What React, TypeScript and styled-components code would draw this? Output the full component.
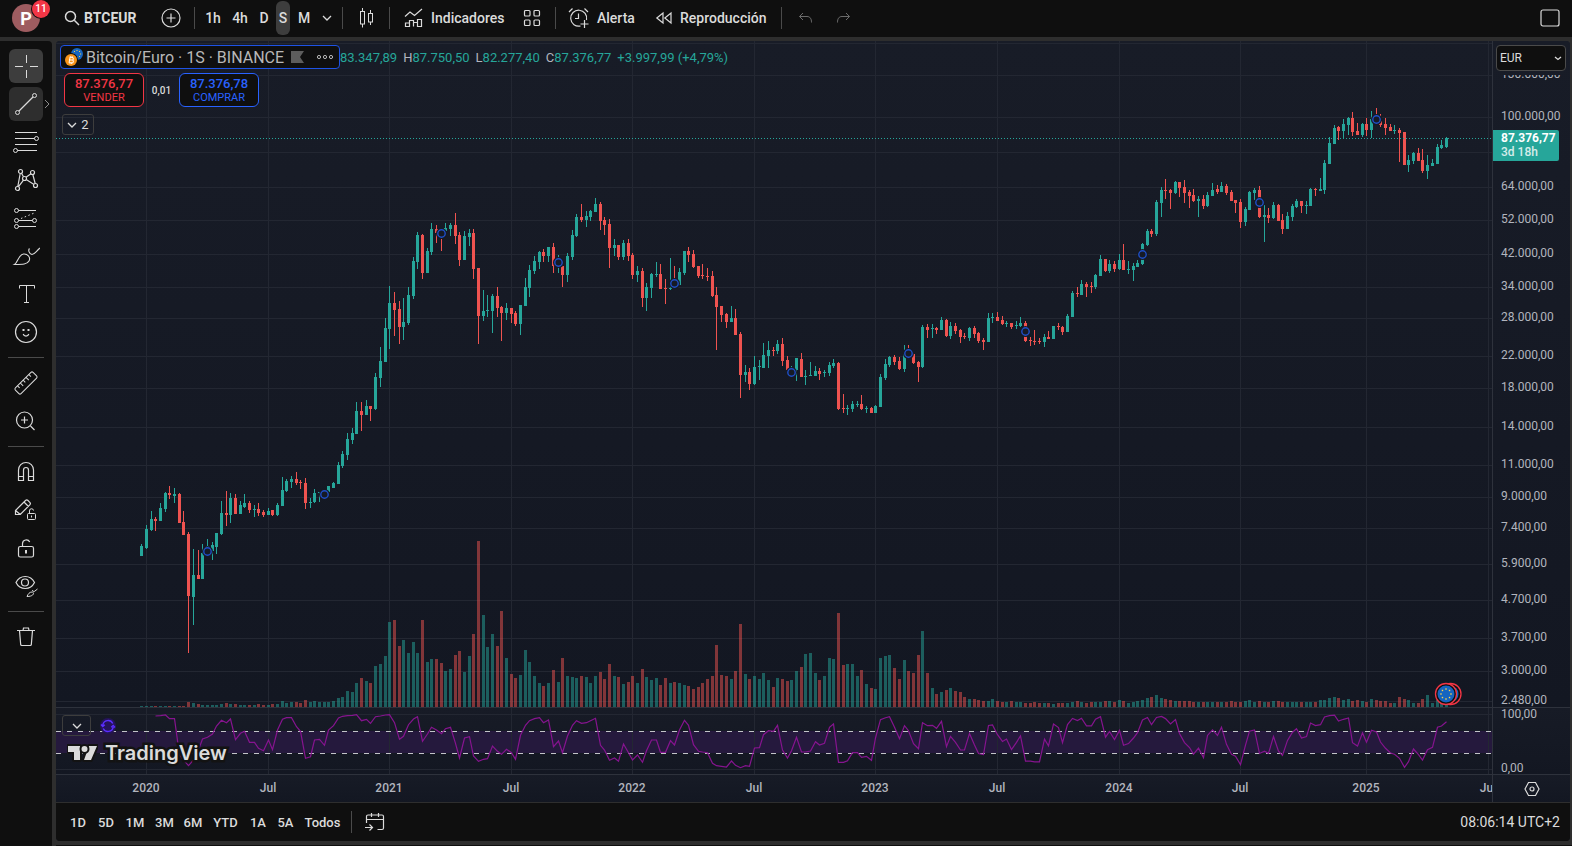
import React from "react";
import styled, { createGlobalStyle } from "styled-components";

const GlobalStyle = createGlobalStyle`
  * { box-sizing: border-box; }
  html, body { margin: 0; background: #2e2e2e; }
  body, button, select { font-family: Roboto, "Noto Sans", sans-serif; }
  button { appearance: none; border: 0; background: none; padding: 0; margin: 0; color: inherit; cursor: pointer; }
  svg { flex-shrink: 0; }
`;

/* ---------- chart data ---------- */

const FIRST_BAR = 85.4;
const BAR_STEP = 4.6755;
const barX = (i: number) => Math.round(FIRST_BAR + BAR_STEP * i);

// Each run: top offset of the run, then bars as colour + high, body top, body bottom, low (in thirds of a pixel).
const RUNS: [number, string][] = [
  [379, `g372,378,408,408 g315,327,384,387 g273,297,330,333 r291,297,303,333 g249,264,303,303 g216,219,267,276 r198,219,225,237 g204,222,228,249 r219,222,309,309 r273,306,345,345
  r336,342,528,699 g387,465,531,615 r390,465,477,477 g372,399,477,477 g357,378,390,405 g366,375,393,420 g339,339,381,402 g243,279,342,345 r213,279,285,318 g219,234,285,309
  r222,234,282,282 g243,255,282,282 g222,249,261,264 r243,249,270,279 g255,267,270,291 r249,267,279,288 r270,276,285,291 g264,273,285,285 r270,270,285,288 g249,255,285,288
  g171,210,258,258 g177,183,213,216 g168,177,186,204 r156,177,189,195 r180,186,189,207 r174,189,249,267 g234,246,249,264 g207,219,246,249 g216,216,219,246 g213,216,222,225
  g198,198,216,222 g186,189,204,204 g126,135,192,192 g93,102,138,144 g39,57,105,120 g24,39,60,72 g-54,-27,42,42`],
  [149, `r636,663,675,723 g630,648,675,675 r648,648,657,693
  g549,561,657,660 g471,513,564,591 g384,414,516,516 g288,339,417,477 r306,339,360,438 r333,357,411,462 g324,396,411,450 g291,315,399,405 g201,213,318,327 g126,135,216,237
  r132,135,249,267 g174,183,249,249 g99,117,186,195 r105,117,129,159 r117,120,144,183 g99,114,123,126 g99,105,117,138 r69,105,138,162 r126,135,210,228 g123,138,210,210
  g117,129,141,168 r117,129,237,267 r234,234,378,462 g300,363,378,393 g315,360,363,381 g312,318,363,429 r291,318,354,381 r348,351,369,453 g339,354,369,390 r354,354,372,399
  r363,369,402,408 g345,345,402,435 g264,291,348,348 g225,240,294,321 g198,213,243,252 g183,186,216,237 r177,186,198,216 g171,171,198,216 r159,171,228,249 g195,210,228,249
  r222,228,255,291 g189,198,255,276 g120,135,201,210 g72,81,138,141 r42,81,90,96 g63,78,90,111 g60,63,81,93 g24,42,66,66 r36,42,93,120 r81,90,105,135
  r87,102,174,234 g147,165,174,198 r165,165,201,210 g150,159,201,210 r147,159,198,213 r189,195,255,267 g228,243,255,276 r234,243,324,351 g279,291,324,363 g249,252,294,324 g216,252,255,261`],
  [179, `r132,162,207,207 r177,204,207,252 g114,204,207,210 r138,180,192,195 g144,156,195,195 g93,93,159,165 r81,93,105,126 r90,102,141,144 r138,138,168,174
  r132,165,168,177 r144,168,171,183 r153,168,228,231 r201,225,261,390 r258,258,285,306 r279,282,306,324 g258,294,306,306 r267,294,345,345 r336,342,465,534 g435,456,465,486
  r444,456,492,510 g408,441,492,495 g420,438,441,480 g369,405,444,444 g363,390,408,444 r381,390,393,408 g360,372,393,402 r354,372,423,438 r408,420,450,456 g438,447,459,465
  g414,414,450,483 r399,417,471,471 g450,468,471,495 g426,465,468,468 g438,453,468,468 r444,453,462,480 g450,456,459,471 g426,435,459,468 g417,429,438,444 r426,429,567,570
  r522,564,567,579 g555,564,567,585 g543,552,567,576 g543,552,555,561 r525,552,567,570 g558,564,567,579 r561,564,579,579 g555,558,579,579 g462,471,561,561 g417,432,474,480
  g408,411,435,441 r405,411,426,435 r411,423,447,450 g375,402,447,456 r375,390,411,417 r399,402,429,432 r423,426,441,486 g315,321,441,444 r312,321,330,354 g312,324,327,354 r321,324,330,342`],
  [129, `g441,450,480,480 r447,450,498,501 g456,468,498,507 r459,468,483,492 r477,480,501,519 r489,498,501,507 g471,474,504,513 r468,474,492,504 r486,489,513,519
  r504,510,516,540 g429,444,516,516 g429,441,444,459 r426,441,453,453 r438,450,462,465 g453,459,462,471 r459,459,471,477 g453,465,468,477 g441,459,468,471 r453,459,513,516
  r501,510,513,528 r480,513,516,525 r504,513,516,522 g492,501,516,531 r483,501,507,507 g468,468,507,507 r459,468,471,480 r468,471,486,495 g432,438,486,486 g363,369,441,441
  r351,369,372,381 g330,342,375,375 r336,342,351,381 r336,348,351,369 g312,315,351,357 g255,267,318,318 r267,267,303,306 g270,282,303,309 r273,282,297,306 g252,270,297,300
  r222,270,300,300 g273,297,300,312 g279,288,300,333 g270,279,291,291 g219,222,282,285 g177,183,225,228 r177,183,192,201 g90,96,192,198 g51,60,99,141 r27,60,63,87
  r57,60,69,117 g33,36,69,72 r36,36,54,81 r30,51,69,99 r60,66,78,114 r57,75,93,96 g78,87,93,141`],
  [49, `r315,327,348,357 g306,315,348,351 g279,300,318,318
  r285,297,306,312 g276,288,306,306 r282,288,309,315 r300,306,333,333 r330,330,339,369 r327,336,396,414 g351,357,396,408 g303,306,360,360 g294,300,309,330 r288,300,381,384
  g345,375,381,456 r354,375,384,399 g336,345,384,387 r342,345,393,393 r372,390,417,432 g366,378,417,417 g342,348,381,393 g327,333,351,354 r333,333,348,369 g333,345,348,372
  g294,297,348,348 r294,297,300,318 g264,297,303,303 g210,219,300,312 g141,159,222,222 g105,114,162,162 r108,111,123,150 g87,102,123,147 g81,84,105,135 r66,84,126,138
  r99,123,135,135 g99,102,135,141 r84,102,120,138 g63,87,120,144 r54,75,90,102 r72,93,105,111 r84,102,114,135 r102,111,123,123 g105,120,123,132 r114,120,129,216
  r126,126,225,225 g195,210,225,246 g186,189,213,222 r174,189,213,213 r177,210,243,249 g195,225,243,267 g207,219,228,228 g162,171,222,222 g150,165,174,177 g141,144,171,174`],
];

type Bar = { up: boolean; high: number; top: number; bottom: number; low: number };

const BARS: Bar[] = RUNS.flatMap(([base, text]) =>
  text.trim().split(/\s+/).map((item) => {
    const [high, top, bottom, low] = item.slice(1).split(",").map((v) => base + Math.round(Number(v) / 3));
    return { up: item[0] === "g", high, top, bottom, low };
  })
);

const VOLUME = [
  1, 1, 1, 1, 1, 1, 1, 1, 1, 1, 5, 4, 3, 2, 2, 2, 2, 3, 4, 3, 3, 2, 2, 2, 2, 3, 2, 2, 3, 3, 6, 4, 5, 5, 4, 7, 5, 6, 5, 5, 5, 6, 9, 10, 16, 15, 24,
  29, 26, 24, 41, 43, 51, 85, 87, 61, 67, 54, 65, 54, 87, 45, 48, 48, 44, 36, 38, 52, 56, 35, 51, 73, 166, 92, 60, 73, 61, 96, 49, 33, 29, 32, 57, 45,
  31, 24, 21, 24, 37, 25, 49, 31, 30, 29, 31, 30, 24, 31, 35, 28, 43, 31, 30, 23, 25, 31, 24, 38, 30, 27, 29, 22, 29, 24, 25, 24, 22, 21, 18, 20, 24,
  28, 31, 62, 32, 31, 28, 36, 83, 33, 28, 31, 28, 34, 27, 20, 29, 28, 26, 27, 36, 40, 53, 54, 34, 27, 31, 49, 48, 94, 42, 43, 43, 31, 37, 23, 19, 18,
  49, 51, 52, 39, 28, 47, 36, 34, 52, 76, 34, 19, 13, 15, 17, 19, 16, 15,
  10, 8, 8, 7, 6, 6, 8, 6, 5, 5, 6, 5, 5, 4, 4, 5, 4, 4, 4, 3, 4, 4, 4, 5, 6, 5, 4, 5, 5, 5, 6, 6, 5, 7, 6, 4, 5, 6, 7, 9, 10, 12, 9, 8, 7, 6, 6, 6, 6, 5,
  5, 5, 5, 5, 5, 5, 5, 6, 5, 5, 6, 7, 5, 6, 5, 5, 6, 6, 5, 5, 5, 5, 5, 5, 5, 5, 7, 7, 9, 10, 9, 7, 8, 6, 7, 6, 5, 8, 7, 6, 6, 4, 4, 10, 8, 7, 4, 4, 8, 12, 4, 7, 5, 4,
];

// RSI line of the first and of the last bars, in thirds of a pixel; the bars between are derived from the closes.
const RSI_LENGTH = 3;
const RSI_HEAD = [
  558, 557, 555, 566, 566, 675, 690, 707, 690, 660, 627, 622, 612, 588, 571, 578, 567, 629, 610, 604, 637, 637, 655, 662, 630, 659, 600, 568, 563, 563,
  590, 604, 685, 680, 630, 628, 646, 600, 587, 564, 559, 557, 556, 554, 572, 568, 580, 560, 558, 555, 554, 578, 628, 619, 584, 567, 560, 634, 612, 592,
  600, 611, 596, 592, 640, 684, 624, 620, 678, 694, 688, 686, 648, 664, 673, 658, 668, 688, 616, 586, 572, 566, 563, 578, 570, 650, 633, 668, 618, 586,
  572, 580, 578, 572, 565, 646, 660, 691, 684, 694, 642, 668, 690, 675, 697, 662, 630, 630, 667, 667, 632, 645, 600, 571, 586, 644, 664, 666, 668, 700,
  707, 709, 711, 693, 706, 713, 707, 709, 654, 653, 614, 602, 604, 586, 660, 684, 662, 622, 666, 666, 663, 635, 645, 640, 592, 582, 697, 697, 692, 668,
  668, 682, 679, 691, 624, 569, 563, 560, 592, 626, 587, 602, 641, 656, 578, 587, 586, 595, 574, 650, 619, 637, 660,
];
const RSI_TAIL = [601, 606, 636, 655, 669, 673, 685, 712, 695, 657, 674, 690, 659, 652, 592, 588, 575];

const closes = BARS.map((b) => Math.exp(-(b.up ? b.top : b.bottom) * 0.00633));

const RSI_POINTS = (() => {
  const points: string[] = [];
  let gain = 0;
  let loss = 0;
  for (let i = 1; i < closes.length; i++) {
    const change = closes[i] - closes[i - 1];
    const weight = i <= RSI_LENGTH ? i : RSI_LENGTH;
    gain += (Math.max(change, 0) - gain) / weight;
    loss += (Math.max(-change, 0) - loss) / weight;
    if (i < RSI_LENGTH) continue;
    const stored = RSI_HEAD[i - RSI_LENGTH] ?? RSI_TAIL[i - (closes.length - RSI_TAIL.length)];
    const y = stored ? stored / 3 - 178 : 61.5 - (55 * gain) / (gain + loss);
    points.push(`${barX(i) + 0.5},${y.toFixed(1)}`);
  }
  return points.join(" ");
})();

const MARKERS: [number, number][] = [
  [151, 510], [268, 453], [385, 192], [502, 221], [618, 242], [735, 331], [852, 312], [969, 290], [1086, 213], [1203, 161], [1320, 78],
];

const V_LINES = [90, 212, 333, 455, 576, 698, 819, 941, 1063, 1184, 1310, 1432];
const TIME_LABELS = ["2020", "Jul", "2021", "Jul", "2022", "Jul", "2023", "Jul", "2024", "Jul", "2025", "Jul"];
const PRICES: [number, string][] = [
  [34, "130.000,00"], [76, "100.000,00"], [111, ""], [146, "64.000,00"], [179, "52.000,00"], [213, "42.000,00"], [246, "34.000,00"],
  [277, "28.000,00"], [315, "22.000,00"], [347, "18.000,00"], [386, "14.000,00"], [424, "11.000,00"], [456, "9.000,00"], [487, "7.400,00"],
  [523, "5.900,00"], [559, "4.700,00"], [597, "3.700,00"], [630, "3.000,00"], [660, "2.480,00"],
];

/* ---------- page frame ---------- */

const Page = styled.div`
  min-height: 100vh;
  display: flex;
  flex-direction: column;
  gap: 4px;
  color: #dbdbdb;
`;
const TopBar = styled.header`
  height: 37px;
  padding-bottom: 1px;
  display: flex;
  align-items: center;
  background: #0f0f0f;
`;
const Body = styled.div`
  flex: 1;
  display: flex;
  gap: 4px;
`;
const ToolBar = styled.nav`
  width: 52px;
  flex: none;
  padding-top: 6px;
  background: #0f0f0f;
  border-top-right-radius: 4px;
  display: flex;
  flex-direction: column;
  align-items: center;
`;
const Main = styled.main`
  flex: 1;
  min-width: 0;
  display: flex;
  flex-direction: column;
`;
const ChartCard = styled.section`
  flex: 1;
  margin-right: 2px;
  display: flex;
  flex-direction: column;
  border-radius: 4px;
  overflow: hidden;
  background: #131722;
`;
const NextPanel = styled.div`
  height: 1px;
  margin-top: 4px;
  background: #0f0f0f;
`;

/* ---------- top bar ---------- */

const Avatar = styled.button`
  position: relative;
  width: 28px;
  height: 28px;
  margin: 0 24px 0 12px;
  border-radius: 50%;
  background: #9e5c60;
  color: #fff;
  font-size: 18px;
  font-weight: 700;
`;
const Count = styled.span`
  position: absolute;
  left: 20px;
  top: -4px;
  width: 18px;
  height: 18px;
  border-radius: 9px;
  background: #f23645;
  box-shadow: 0 0 0 1px #0f0f0f;
  font-size: 10px;
  font-weight: 500;
  line-height: 18px;
`;
const TopButton = styled.button<{ $w: number; $start?: boolean; $bold?: boolean; $dim?: boolean }>`
  width: ${(p) => p.$w}px;
  height: 34px;
  flex: none;
  display: flex;
  align-items: center;
  justify-content: ${(p) => (p.$start ? "flex-start" : "center")};
  gap: ${(p) => (p.$bold ? 4 : 7)}px;
  font-size: 14px;
  font-weight: ${(p) => (p.$bold ? 700 : 500)};
  color: ${(p) => (p.$dim ? "#6b6b6b" : "#dbdbdb")};
  white-space: nowrap;
`;
const Interval = styled(TopButton)<{ $active?: boolean }>`
  margin: ${(p) => (p.$active ? "0 1px" : "0")};
  border-radius: 6px;
  background: ${(p) => (p.$active ? "#3d3d3d" : "none")};
`;
const BarDivider = styled.span<{ $before?: number; $after?: number }>`
  width: 1px;
  height: 22px;
  flex: none;
  margin: 0 ${(p) => p.$after ?? 0}px 0 ${(p) => p.$before ?? 0}px;
  background: #4a4a4a;
`;
const Spacer = styled.span`
  flex: 1;
`;

/* ---------- left tools ---------- */

const ToolSlot = styled.div`
  position: relative;
  height: 38px;
  display: flex;
  align-items: center;
`;
const ToolButton = styled.button<{ $bg?: string }>`
  width: 34px;
  height: 34px;
  display: flex;
  align-items: center;
  justify-content: center;
  border-radius: 6px;
  background: ${(p) => p.$bg ?? "none"};
`;
const ToolDivider = styled.hr`
  width: 36px;
  height: 1px;
  flex: none;
  margin: 6px 0;
  border: 0;
  background: #4a4a4a;
`;
const ToolMore = styled.button`
  position: absolute;
  left: 35px;
  top: 12px;
  width: 6px;
  height: 14px;
  display: flex;
  align-items: center;
  color: #8c8c8c;
`;

/* ---------- chart ---------- */

const PaneRow = styled.div<{ $h?: number }>`
  position: relative;
  display: flex;
  flex: ${(p) => (p.$h ? "none" : "1 0 666px")};
  height: ${(p) => (p.$h ? `${p.$h}px` : "auto")};
  background: ${(p) => (p.$h ? "linear-gradient(#171b26, #131722)" : "linear-gradient(#181c27, #131722)")};
  & + & { border-top: 1px solid #2e323c; }
`;
const Plot = styled.svg`
  position: absolute;
  width: calc(100% - 78px);
  height: 100%;
  display: block;
`;
const PlotBox = styled.div`
  flex: 1;
  min-width: 0;
`;
const AxisColumn = styled.div`
  width: 78px;
  flex: none;
  display: flex;
  flex-direction: column;
  align-items: center;
  border-left: 1px solid #2e323c;
`;
const AxisSvg = styled.svg`
  width: 77px;
  flex: 1;
  display: block;
  text { font-size: 12px; fill: #b2b5be; }
`;
const CurrencyRow = styled.div`
  height: 34px;
  width: 100%;
  padding: 4px 4px 0 3px;
`;
const CurrencyBox = styled.label`
  display: flex;
  align-items: center;
  height: 26px;
  padding-right: 3px;
  border: 1px solid #4a4a4a;
  border-radius: 4px;
  background: #0f0f0f;
`;
const CurrencySelect = styled.select`
  appearance: none;
  flex: 1;
  min-width: 0;
  border: 0;
  padding: 0 3px;
  background: none;
  color: #dbdbdb;
  font-size: 12px;
`;
const PriceTag = styled.div`
  position: absolute;
  right: 11px;
  top: 89px;
  width: 66px;
  height: 31px;
  padding: 1px 0 0 8px;
  border-radius: 0 2px 2px 0;
  background: #26a69a;
  color: #fff;
  font-size: 12px;
  line-height: 14px;
  font-weight: 700;
`;
const Countdown = styled.div`
  font-weight: 500;
  opacity: 0.8;
`;
const SettingsButton = styled.button`
  flex: 1;
  display: flex;
  align-items: center;
`;
const TimeSvg = styled(Plot)`
  text { font-size: 12px; fill: #b2b5be; font-weight: 500; text-anchor: middle; }
`;

/* ---------- legend ---------- */

const Legend = styled.div`
  position: absolute;
  left: 4px;
  top: 4px;
  display: flex;
  flex-direction: column;
  align-items: flex-start;
`;
const LegendRow = styled.div`
  display: flex;
  align-items: center;
  height: 24px;
`;
const TitleBox = styled.div`
  width: 280px;
  height: 24px;
  flex: none;
  padding: 0 5px 0 4px;
  display: flex;
  align-items: center;
  border: 1px solid #1e53e5;
  border-radius: 4px;
  background: #0f0f0f;
  font-size: 16px;
  color: #b8b8b8;
  white-space: nowrap;
`;
const TitleText = styled.span`
  flex: 1;
  margin-left: 3px;
`;
const TitleButton = styled.button`
  display: flex;
  & + & { margin-left: 12px; }
`;
const Values = styled.div`
  display: flex;
  gap: 6px;
  overflow: hidden;
  font-size: 13px;
  color: #26a69a;
  white-space: nowrap;
  b { font-weight: 400; color: #b2b5be; }
`;
const TradeRow = styled.div`
  display: flex;
  align-items: center;
  margin: 4px 0 7px 4px;
`;
const TradeButton = styled.button<{ $c: string }>`
  width: 80px;
  height: 34px;
  padding-top: 2px;
  display: flex;
  flex-direction: column;
  align-items: center;
  justify-content: center;
  border: 1px solid ${(p) => p.$c};
  border-radius: 6px;
  background: #0f0f0f;
  color: ${(p) => p.$c};
  font-size: 11px;
  line-height: 14px;
  strong { font-size: 13px; font-weight: 500; }
`;
const Spread = styled.span`
  width: 35px;
  text-align: center;
  font-size: 10px;
  font-weight: 500;
`;
const SmallBox = styled.button<{ $w: number }>`
  width: ${(p) => p.$w}px;
  height: 21px;
  display: flex;
  align-items: center;
  justify-content: center;
  gap: 4px;
  border: 1px solid #3d3d3d;
  border-radius: 3px;
  font-size: 13px;
`;
const CollapseButton = styled(SmallBox)`
  margin-left: 2px;
`;
const PaneLegend = styled.div`
  position: absolute;
  left: 6px;
  top: 7px;
  display: flex;
  align-items: center;
  gap: 9px;
`;
const Brand = styled.a`
  position: absolute;
  left: 11px;
  bottom: 8px;
  display: flex;
  align-items: center;
  gap: 7px;
  color: #dbdbdb;
  font-family: Inter, sans-serif;
  font-size: 20px;
  line-height: 26px;
  font-weight: 600;
  text-decoration: none;
  -webkit-text-stroke: 5px #131313;
  paint-order: stroke fill;
`;

/* ---------- bottom bar ---------- */

const RangeBar = styled.footer`
  height: 39px;
  display: flex;
  align-items: center;
  padding: 0 10px 0 8px;
  border-top: 1px solid #2e2e2e;
  background: #0f0f0f;
`;
const RangeButton = styled.button<{ $w: number }>`
  width: ${(p) => p.$w}px;
  height: 28px;
  font-size: 13px;
  font-weight: 500;
`;
const Clock = styled.button`
  font-size: 14px;
  font-weight: 400;
`;

/* ---------- icons ---------- */

type IconProps = { children: React.ReactNode; size?: number; w?: number };
const Icon = ({ children, size = 28, w }: IconProps) => (
  <svg width={w ?? size} height={size} viewBox={`0 0 ${w ?? size} ${size}`} fill="none" stroke="currentColor" aria-hidden="true">
    {children}
  </svg>
);

const Chevron = () => (
  <Icon w={10} size={6}><path d="M1 1l4 4 4-4" strokeWidth="1.3" /></Icon>
);

const Stars = ({ cx, cy, r, s }: { cx: number; cy: number; r: number; s: number }) => (
  <>
    {Array.from({ length: 8 }, (_, k) => (
      <rect
        key={k}
        x={cx + r * Math.cos((k * Math.PI) / 4) - s / 2}
        y={cy + r * Math.sin((k * Math.PI) / 4) - s / 2}
        width={s}
        height={s}
        fill="#ffd54a"
        stroke="none"
      />
    ))}
  </>
);

const PairLogo = () => (
  <svg width="18" height="18" viewBox="0 0 18 18" aria-hidden="true">
    <circle cx="12" cy="6" r="6" fill="#1565c0" />
    <Stars cx={12} cy={6} r={3.6} s={1} />
    <circle cx="6" cy="12" r="7" fill="#0f0f0f" />
    <circle cx="6" cy="12" r="6" fill="#f7931a" />
    <path d="M4.6 9.3h2.2a1.3 1.3 0 0 1 0 2.6H4.6zM4.6 11.9h2.6a1.4 1.4 0 0 1 0 2.8H4.6zM5.4 8.3v1M6.9 8.3v1M5.4 14.7v1M6.9 14.7v1" stroke="#fff" strokeWidth="1" fill="none" transform="rotate(10 6 12)" />
  </svg>
);

const CrossIcon = () => <Icon><path d="M3 14.5h8M18 14.5h8M14.5 3v8M14.5 18v8" /></Icon>;
const TrendIcon = () => (
  <Icon><circle cx="22.5" cy="5.5" r="2" /><circle cx="5.5" cy="22.5" r="2" /><path d="M7 21L21 7" strokeWidth="1.2" /></Icon>
);
const FibIcon = () => (
  <Icon><path d="M3 4.5h22M3 10.5h19.500M3 16.500h22M5.500 22.500H25" /><circle cx="24.5" cy="10.500" r="2" /><circle cx="3.500" cy="22.500" r="2" /></Icon>
);
const PatternIcon = () => (
  <Icon>
    <g strokeWidth="1.2">
      <circle cx="8.500" cy="5.500" r="2" /><circle cx="20.500" cy="6.500" r="2" /><circle cx="12.500" cy="12.500" r="2" />
      <circle cx="5.500" cy="22.500" r="2" /><circle cx="23.500" cy="19.500" r="2" />
      <path d="M8.200 7.500L5.800 20.500M9.500 7.300l2 3.400M14 11.200l5-3.500M20.800 8.500l2.400 9M6.500 20.700l5-6.600M14.200 13.600l7.800 4.800" />
    </g>
  </Icon>
);
const ForecastIcon = () => (
  <Icon>
    <circle cx="4.500" cy="6.500" r="2" /><circle cx="4.500" cy="16.500" r="2" /><circle cx="4.500" cy="22.500" r="2" /><circle cx="22.500" cy="16.500" r="2" />
    <path d="M6.500 6.500H24M6.500 16.500h14M6.500 22.500H24" /><path d="M9 14.500L23.500 8.500" strokeDasharray="1.500 2.500" />
  </Icon>
);
const BrushIcon = () => (
  <Icon><path d="M2.500 22.500c3.500-2 3.500-9.500 9-10.500 4-.5 7.500 3.500 5.500 7-2 3.500-6 3.500-14.500 3.500zM17.500 6.500c-1.500 1.500-.5 5.500 2.500 6 2.500 0 3.500-2.500 8-6.500" strokeWidth="1.100" /></Icon>
);
const TextIcon = () => <Icon><path d="M7.500 8.500v-3h15v3M14.500 5.500v17M12 22.500h5" /></Icon>;
const SmileIcon = () => (
  <Icon>
    <circle cx="14" cy="14" r="10.500" strokeWidth="1.200" />
    <path d="M10.500 12h2M15.500 12h2" strokeWidth="2" /><path d="M11.200 16c.8 2.700 4.800 2.700 5.600 0" strokeWidth="1.200" />
  </Icon>
);
const RulerIcon = () => (
  <Icon><g transform="rotate(-45 14 14)"><rect x="1.500" y="10" width="25" height="8" rx="1.500" /><path d="M6 10v3M10 10v4M14 10v3M18 10v4M22 10v3" /></g></Icon>
);
const ZoomIcon = () => (
  <Icon><circle cx="12.500" cy="13" r="8" strokeWidth="1.200" /><path d="M12.500 9.500v7M9 13h7M18.500 19l4 4" strokeWidth="1.200" /></Icon>
);
const MagnetIcon = () => (
  <Icon><path d="M6.500 22.500V12a7.500 7.500 0 0 1 15 0v10.500h-5V12a2.500 2.500 0 0 0-5 0v10.500zM6.500 18.500h5M16.500 18.500h5" strokeWidth="1.200" /></Icon>
);
const DrawLockIcon = () => (
  <Icon>
    <path d="M3.500 14.500l10-10a1.800 1.800 0 0 1 2.500 0l1.800 1.800a1.800 1.800 0 0 1 0 2.500l-9.500 9.700H3.500zM12 6l4.500 4.500M3.500 14.500l4.800 4" strokeWidth="1.200" />
    <rect x="15.500" y="17.500" width="8" height="6" rx="1" /><path d="M17.500 17.500v-2.500a2 2 0 0 1 4-.5M19.500 19.500v2" />
  </Icon>
);
const LockIcon = () => (
  <Icon><rect x="6.500" y="12.500" width="15" height="10.500" rx="1.800" strokeWidth="1.200" /><path d="M10.500 12.500V9.500a3.800 3.800 0 0 1 7.200-1.500" strokeWidth="1.200" /><path d="M14 16v3.500" strokeWidth="2" /></Icon>
);
const EyeIcon = () => (
  <Icon>
    <path d="M4 10.500C8 2.500 18.500 2.500 22.500 10.500 18.500 18.500 8 18.500 4 10.500z" strokeWidth="1.200" /><circle cx="13" cy="10.500" r="3.500" strokeWidth="1.200" />
    <path d="M15 24.500c1-2.500 2.500-4.500 5-4.500s2.500 4.500-5 4.500zM20.500 18c0 1.500 1.500 2 2.500 1l2.500-2" />
  </Icon>
);
const TrashIcon = () => (
  <Icon><path d="M5 7.500h18M11 7.500l.5-2.500h5l.5 2.500M7.500 7.500l1.200 14.200a1 1 0 0 0 1 .8h8.600a1 1 0 0 0 1-.8L20.500 7.500" strokeWidth="1.200" /></Icon>
);

const SearchIcon = () => <Icon size={16}><circle cx="6.500" cy="6.500" r="5" strokeWidth="1.500" /><path d="M10.300 10.300l4.700 4.700" strokeWidth="1.500" /></Icon>;
const PlusCircle = () => <Icon size={20}><circle cx="10" cy="10" r="9" strokeWidth="1.200" /><path d="M10 5.500v9M5.500 10h9" strokeWidth="1.200" /></Icon>;
const CandlesIcon = () => <Icon w={16} size={20}><path d="M4.500 0v3M4.500 16v3.500M12.500 2v3M12.500 14v3" /><rect x="2.500" y="3.500" width="4" height="12.500" /><rect x="10.500" y="5.500" width="4" height="8.500" /></Icon>;
const IndicatorIcon = () => (
  <Icon size={20}><path d="M1 8.500l5-4.500 4.500 3.500L18 1M1.500 18.500v-3.500h4v3.500zM5.500 18.500v-6h4v6M9.500 18.500v-4h4v4M13.500 18.500v-7h4v7z" strokeWidth="1.200" /></Icon>
);
const LayoutIcon = () => (
  <Icon size={18}>{[[1.5, 1.5], [11, 1.5], [1.5, 11], [11, 11]].map(([x, y]) => <rect key={`${x}${y}`} x={x} y={y} width="5.500" height="5.500" rx="1" strokeWidth="1.200" />)}</Icon>
);
const AlertIcon = () => (
  <Icon w={22} size={22}><path d="M18.500 13a8 8 0 1 0-6 6M10.500 6.500v5H7M1 5l3.500-3.500M16.500 1.500L20 5M16.500 13v8M12.500 17h8" strokeWidth="1.200" /></Icon>
);
const RewindIcon = () => <Icon w={18} size={14}><path d="M8 2v10L1.800 7zM16 2v10L9.800 7z" strokeWidth="1.200" /></Icon>;
const UndoIcon = () => <Icon w={15} size={12}><path d="M5 1L1.500 4.500 5 8M1.500 4.500H9c3 0 4.500 2 4.500 6" /></Icon>;
const RedoIcon = () => <Icon w={15} size={12}><path d="M10 1l3.500 3.500L10 8M13.500 4.500H6c-3 0-4.500 2-4.500 6" /></Icon>;
const FrameIcon = () => <Icon w={20} size={18}><rect x="1" y="1" width="18" height="16" rx="2" strokeWidth="1.200" /></Icon>;
const CalendarIcon = () => <Icon size={20}><path d="M1.500 11V4.500a1.500 1.500 0 0 1 1.500-1.500h14a1.500 1.500 0 0 1 1.500 1.500V16a1.500 1.500 0 0 1-1.500 1.500h-4.500M1.500 7.500h17M6.500 1v4M13.500 1v4M0 15.500h7M4.500 12.500l3 3-3 3" strokeWidth="1.200" /></Icon>;
const GearIcon = () => <Icon size={16}><path d="M4.500 1.500h7L15 8l-3.500 6.500h-7L1 8z" strokeWidth="1.200" /><circle cx="8" cy="8" r="2" strokeWidth="1.200" /></Icon>;
const LogoMark = () => (
  <svg width="31" height="18" viewBox="0 0 31 18" aria-hidden="true">
    <g fill="#dbdbdb" stroke="#131313" strokeWidth="4" paintOrder="stroke" strokeLinejoin="round">
      <path d="M1 2h12v14H7V8H1zM22 2h8l-6 14h-7z" /><circle cx="17.500" cy="5" r="3" />
    </g>
  </svg>
);

const TOOLS: (React.FC | null)[] = [
  CrossIcon, TrendIcon, FibIcon, PatternIcon, ForecastIcon, BrushIcon, TextIcon, SmileIcon, null,
  RulerIcon, ZoomIcon, null, MagnetIcon, DrawLockIcon, LockIcon, EyeIcon, null, TrashIcon,
];
const TOOL_NAMES = [
  "Cursor", "Línea de tendencia", "Fibonacci", "Patrones", "Previsión", "Pincel", "Texto", "Iconos", "",
  "Medir", "Acercar", "", "Imán", "Modo dibujo", "Bloquear", "Ocultar", "", "Eliminar",
];
const TOOL_BG: Record<number, string> = { 0: "#3d3d3d", 1: "#2e2e2e" };

const RANGES: [string, number][] = [["1D", 28], ["5D", 28], ["1M", 30], ["3M", 29], ["6M", 28], ["YTD", 37], ["1A", 28], ["5A", 27], ["Todos", 47]];

/* ---------- chart panes ---------- */

const UP = "#26a69a";
const DOWN = "#ef5350";
const GRID = "#232732";

const PricePlot = () => (
  <Plot role="img" aria-label="BTCEUR" shapeRendering="crispEdges">
    {PRICES.map(([y]) => <rect key={y} x="0" y={y} width="100%" height="1" fill={GRID} />)}
    <rect x="0" y="2" width="100%" height="1" fill={GRID} />
    {V_LINES.map((x) => <rect key={x} x={x} y="0" width="1" height="100%" fill={GRID} />)}
    {BARS.map((b, i) => {
      const h = VOLUME[i] ?? 4;
      return <rect key={i} x={barX(i) - 1} y={666 - h} width="3" height={h} fill={b.up ? UP : DOWN} opacity="0.5" />;
    })}
    {BARS.map((b, i) => (
      <g key={i} fill={b.up ? UP : DOWN}>
        <rect x={barX(i)} y={b.high} width="1" height={b.low - b.high} />
        <rect x={barX(i) - 1} y={b.top} width="3" height={Math.max(1, b.bottom - b.top)} />
      </g>
    ))}
    <line x1="0" x2="100%" y1="97.5" y2="97.5" stroke={UP} strokeDasharray="1 2" />
    <g shapeRendering="auto">
      {MARKERS.map(([x, y]) => (
        <g key={x}>
          <circle cx={x + 0.5} cy={y + 0.5} r="5.500" fill="#161a25" />
          <circle cx={x + 0.5} cy={y + 0.5} r="3.700" fill="none" stroke="#1e4fc8" strokeWidth="1.400" />
        </g>
      ))}
      <circle cx="1394.500" cy="653" r="10.500" fill="#0f0f0f" stroke="#f23645" strokeWidth="1.300" />
      <circle cx="1394.500" cy="653" r="8" fill="#1565c0" />
      <circle cx="1390" cy="653" r="10.500" fill="#0f0f0f" stroke="#f23645" strokeWidth="1.300" />
      <circle cx="1390" cy="653" r="8.500" fill="#1565c0" />
      <Stars cx={1390} cy={653} r={5} s={1.4} />
    </g>
  </Plot>
);

const RsiPlot = () => (
  <Plot role="img" aria-label="RSI">
    <rect x="0" y="23" width="100%" height="22" fill="#25193d" />
    <rect x="0" y="6" width="100%" height="1" fill={GRID} />
    <rect x="0" y="61" width="100%" height="1" fill={GRID} />
    {V_LINES.map((x) => <rect key={x} x={x} y="0" width="1" height="100%" fill={GRID} />)}
    <path d="M0 23.500H4000M0 45.500H4000" stroke="#c3c4c9" strokeDasharray="5 6" />
    <polyline points={RSI_POINTS} fill="none" stroke="#86148f" strokeWidth="1.200" />
  </Plot>
);

export default function App() {
  return (
    <Page>
      <GlobalStyle />
      <TopBar>
        <Avatar aria-label="Perfil">P<Count>11</Count></Avatar>
        <TopButton $w={90} $start $bold><SearchIcon />BTCEUR</TopButton>
        <TopButton $w={33} aria-label="Comparar"><PlusCircle /></TopButton>
        <BarDivider $before={7} $after={4} />
        <Interval $w={28}>1h</Interval>
        <Interval $w={26}>4h</Interval>
        <Interval $w={22}>D</Interval>
        <Interval $w={14} $active>S</Interval>
        <Interval $w={26}>M</Interval>
        <TopButton $w={19} aria-label="Más intervalos"><Chevron /></TopButton>
        <BarDivider $before={6} />
        <TopButton $w={46} aria-label="Velas"><CandlesIcon /></TopButton>
        <BarDivider $after={14} />
        <TopButton $w={110} $start><IndicatorIcon />Indicadores</TopButton>
        <TopButton $w={36} aria-label="Plantillas"><LayoutIcon /></TopButton>
        <BarDivider $before={5} $after={12} />
        <TopButton $w={87} $start><AlertIcon />Alerta</TopButton>
        <TopButton $w={126} $start><RewindIcon />Reproducción</TopButton>
        <BarDivider $after={4} />
        <TopButton $w={38} $dim aria-label="Deshacer"><UndoIcon /></TopButton>
        <TopButton $w={38} $dim aria-label="Rehacer"><RedoIcon /></TopButton>
        <Spacer />
        <TopButton $w={44} aria-label="Pantalla"><FrameIcon /></TopButton>
      </TopBar>

      <Body>
        <ToolBar>
          {TOOLS.map((Tool, i) =>
            Tool ? (
              <ToolSlot key={i}>
                <ToolButton $bg={TOOL_BG[i]} aria-label={TOOL_NAMES[i]}><Tool /></ToolButton>
                {i === 1 && <ToolMore aria-label="Más líneas"><Icon w={6} size={10}><path d="M1 1l4 4-4 4" /></Icon></ToolMore>}
              </ToolSlot>
            ) : (
              <ToolDivider key={i} />
            )
          )}
        </ToolBar>

        <Main>
          <ChartCard>
            <PaneRow>
              <PlotBox />
              <PricePlot />
              <AxisColumn>
                <CurrencyRow>
                  <CurrencyBox>
                    <CurrencySelect aria-label="Divisa"><option>EUR</option></CurrencySelect>
                    <Icon w={8} size={5}><path d="M1 1l3 2.500L7 1" strokeWidth="1.300" /></Icon>
                  </CurrencyBox>
                </CurrencyRow>
                <AxisSvg>{PRICES.map(([y, t]) => <text key={y} x="8" y={y - 34 + 3}>{t}</text>)}</AxisSvg>
              </AxisColumn>
              <PriceTag>87.376,77<Countdown>3d 18h</Countdown></PriceTag>
              <Legend>
                <LegendRow>
                  <TitleBox>
                    <PairLogo />
                    <TitleText>Bitcoin/Euro · 1S · BINANCE</TitleText>
                    <TitleButton aria-label="Marcar"><Icon w={13} size={12}><path d="M0 0h13L9 6l4 6H0z" fill="#5d5d5d" stroke="none" /></Icon></TitleButton>
                    <TitleButton aria-label="Más"><Icon w={18} size={6}><circle cx="3" cy="3" r="1.600" /><circle cx="9" cy="3" r="1.600" /><circle cx="15" cy="3" r="1.600" /></Icon></TitleButton>
                  </TitleBox>
                  <Values>
                    <span>83.347,89</span>
                    <span><b>H</b>87.750,50</span>
                    <span><b>L</b>82.277,40</span>
                    <span><b>C</b>87.376,77</span>
                    <span>+3.997,99 (+4,79%)</span>
                  </Values>
                </LegendRow>
                <TradeRow>
                  <TradeButton $c="#f23645"><strong>87.376,77</strong>VENDER</TradeButton>
                  <Spread>0,01</Spread>
                  <TradeButton $c="#2962ff"><strong>87.376,78</strong>COMPRAR</TradeButton>
                </TradeRow>
                <CollapseButton $w={32}><Chevron />2</CollapseButton>
              </Legend>
            </PaneRow>

            <PaneRow $h={67}>
              <PlotBox />
              <RsiPlot />
              <AxisColumn>
                <AxisSvg><text x="8" y="10">100,00</text><text x="8" y="64">0,00</text></AxisSvg>
              </AxisColumn>
              <PaneLegend>
                <SmallBox $w={29} aria-label="Contraer"><Chevron /></SmallBox>
                <Icon size={16}>
                  <circle cx="8" cy="8" r="8" fill="#25135a" stroke="none" />
                  <path d="M2.800 7.200a5.300 5.300 0 0 1 10-1.700M13.200 8.800a5.300 5.300 0 0 1-10 1.700M1 6.500l1.800 2 2-1.800M15 9.500l-1.800-2-2 1.800" stroke="#5b2eff" strokeWidth="1.400" />
                </Icon>
              </PaneLegend>
              <Brand href="#"><LogoMark />TradingView</Brand>
            </PaneRow>

            <PaneRow $h={28}>
              <PlotBox />
              <TimeSvg>{V_LINES.map((x, i) => <text key={x} x={x} y="17">{TIME_LABELS[i]}</text>)}</TimeSvg>
              <AxisColumn><SettingsButton aria-label="Ajustes"><GearIcon /></SettingsButton></AxisColumn>
            </PaneRow>

            <RangeBar>
              {RANGES.map(([t, w]) => <RangeButton key={t} $w={w}>{t}</RangeButton>)}
              <BarDivider $before={5} />
              <TopButton $w={46} aria-label="Ir a"><CalendarIcon /></TopButton>
              <Spacer />
              <Clock>08:06:14 UTC+2</Clock>
            </RangeBar>
          </ChartCard>
          <NextPanel />
        </Main>
      </Body>
    </Page>
  );
}
